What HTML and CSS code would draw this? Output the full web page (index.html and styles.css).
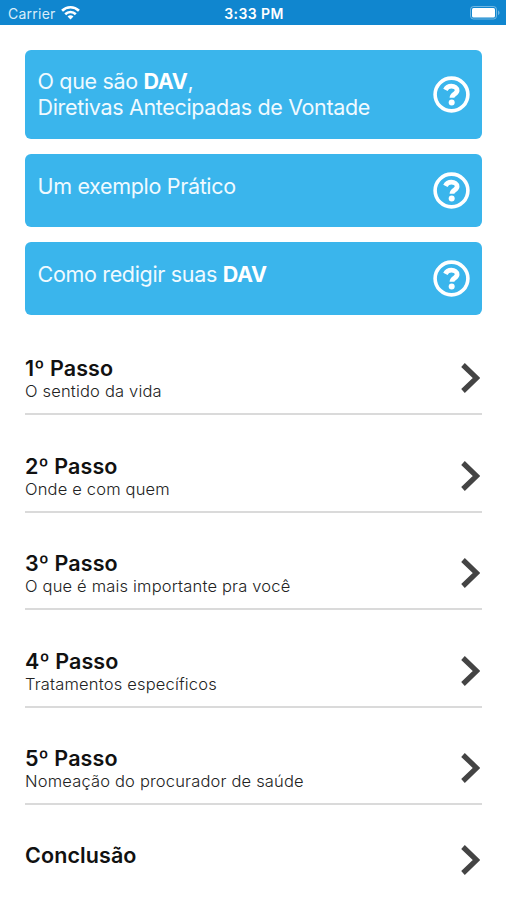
FILE: index.html
```html
<!DOCTYPE html>
<html lang="pt-BR">
<head>
  <meta charset="UTF-8">
  <meta name="viewport" content="width=device-width, initial-scale=1.0">
  <title>DAV</title>
  <link rel="stylesheet" href="styles.css">
</head>
<body>
  <svg width="0" height="0" class="sprite">
    <symbol id="help" viewBox="0 0 37 37">
      <circle cx="18.5" cy="18.5" r="16.4" fill="none" stroke="currentColor" stroke-width="3.6"/>
      <path d="M12.4 13.9C13.6 11.4 15.6 10.2 18.4 10.2C21.6 10.2 24.1 11.9 24.1 14.5C24.1 18.1 19 17.8 19 21.8" fill="none" stroke="currentColor" stroke-width="4.8"/>
      <circle cx="18.7" cy="26.6" r="3" fill="currentColor"/>
    </symbol>
    <symbol id="arrow" viewBox="0 0 20 32">
      <path d="M3 3L16.6 16L3 29" fill="none" stroke="currentColor" stroke-width="5.2"/>
    </symbol>
  </svg>

  <header class="status-bar">
    <div class="carrier">
      <span class="carrier-name">Carrier</span>
      <svg class="wifi" viewBox="0 0 18 14" fill="none" stroke="#fff" stroke-width="2.5">
        <path d="M1 5.3C5.5 0.9 12.5 0.9 17 5.3"/>
        <path d="M4 8.6C6.8 5.9 11.2 5.9 14 8.6"/>
        <path d="M6.2 10.7C7.8 9.2 10.2 9.2 11.8 10.7L9 13.6Z" fill="#fff" stroke="none"/>
      </svg>
    </div>
    <span class="time">3:33 PM</span>
    <div class="battery">
      <svg viewBox="0 0 30 14" width="30" height="14">
        <rect x="0.5" y="0.5" width="26" height="12.5" rx="3" fill="none" stroke="#fff" stroke-opacity=".4"/>
        <rect x="2" y="2" width="23" height="9.5" rx="1.5" fill="#fff"/>
        <path d="M28 4.5C30 5.2 30 8.3 28 9Z" fill="#fff" fill-opacity=".4"/>
      </svg>
    </div>
  </header>

  <main>
    <section class="cards">
      <a class="card card-big">
        <p>O que são <b>DAV</b>,<br>Diretivas Antecipadas de Vontade</p>
        <svg class="help"><use href="#help"/></svg>
      </a>
      <a class="card">
        <p>Um exemplo Prático</p>
        <svg class="help"><use href="#help"/></svg>
      </a>
      <a class="card">
        <p>Como redigir suas <b>DAV</b></p>
        <svg class="help"><use href="#help"/></svg>
      </a>
    </section>

    <ul class="steps">
      <li class="step">
        <div><h3>1º Passo</h3><p>O sentido da vida</p></div>
        <svg class="arrow"><use href="#arrow"/></svg>
      </li>
      <li class="step">
        <div><h3>2º Passo</h3><p>Onde e com quem</p></div>
        <svg class="arrow"><use href="#arrow"/></svg>
      </li>
      <li class="step">
        <div><h3>3º Passo</h3><p>O que é mais importante pra você</p></div>
        <svg class="arrow"><use href="#arrow"/></svg>
      </li>
      <li class="step">
        <div><h3>4º Passo</h3><p>Tratamentos específicos</p></div>
        <svg class="arrow"><use href="#arrow"/></svg>
      </li>
      <li class="step">
        <div><h3>5º Passo</h3><p>Nomeação do procurador de saúde</p></div>
        <svg class="arrow"><use href="#arrow"/></svg>
      </li>
      <li class="step last">
        <div><h3>Conclusão</h3></div>
        <svg class="arrow"><use href="#arrow"/></svg>
      </li>
    </ul>
  </main>
</body>
</html>
```
FILE: styles.css
```css
* {
  padding: 0;
  margin: 0;
  box-sizing: border-box;
}
body {
  height: 900px;
  overflow: hidden;
  background: #fff;
  color: #111;
  font-family: Inter, "Liberation Sans", sans-serif;
}
.sprite {
  display: block;
}
.status-bar {
  display: grid;
  grid-template-columns: 1fr auto 1fr;
  align-items: center;
  height: 24.5px;
  padding: 2px 6px 0 8px;
  background: #1086cf;
  color: #fff;
}
.carrier {
  display: flex;
  align-items: center;
  gap: 5px;
}
.carrier-name {
  font-size: 14px;
  letter-spacing: 0.25px;
  color: #d9edfa;
}
.wifi {
  width: 19px;
  height: 15px;
  margin-top: -2px;
}
.time {
  font-size: 14px;
  font-weight: 600;
  letter-spacing: 0.4px;
}
.battery {
  display: flex;
  justify-content: flex-end;
}
main {
  padding: 25px 24px 0 25px;
}
.cards {
  display: flex;
  flex-direction: column;
  gap: 14.5px;
}
.card {
  display: flex;
  justify-content: space-between;
  align-items: center;
  height: 73.5px;
  padding: 0 12px 0 12.5px;
  border-radius: 6px;
  background: #3ab5ec;
  color: #f0faff;
}
.card p {
  padding-bottom: 9px;
  font-size: 21.5px;
  line-height: 26.5px;
  letter-spacing: -0.33px;
}
.card b {
  color: #fff;
}
.card-big {
  height: 89.5px;
}
.card-big p {
  padding-bottom: 0;
}
.help {
  width: 37px;
  height: 37px;
  color: #fff;
}
.steps {
  list-style-type: none;
}
.step {
  display: flex;
  justify-content: space-between;
  align-items: flex-end;
  height: 97.5px;
  padding-bottom: 12px;
  border-bottom: 2px solid #dadada;
}
.steps .step:first-child {
  height: 100px;
}
.step h3 {
  font-size: 21.5px;
  font-weight: 600;
  line-height: 25px;
  letter-spacing: 0.1px;
}
.step p {
  font-size: 16.5px;
  font-weight: 300;
  line-height: 20px;
  letter-spacing: 0.18px;
  color: #222;
}
.arrow {
  width: 20px;
  height: 32px;
  margin: 0 2px 7px 0;
  color: #444;
}
.last {
  height: 71px;
  padding-bottom: 0;
  border-bottom: none;
}
.last h3 {
  padding-bottom: 8px;
}
.last .arrow {
  margin-bottom: 0;
}
```
